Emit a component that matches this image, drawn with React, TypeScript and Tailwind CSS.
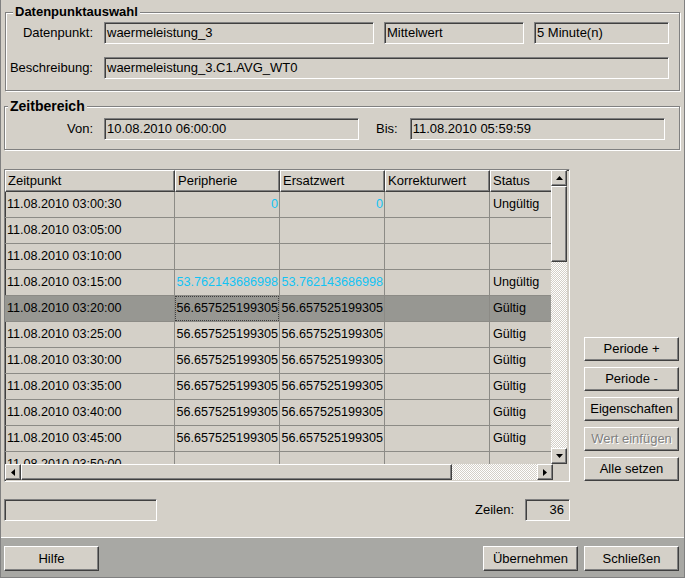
import React from "react";

const raised =
  "bg-[#d4d0c8] border border-t-white border-l-white border-r-[#404040] border-b-[#404040] shadow-[inset_-1px_-1px_0_#808080]";
const sunken =
  "bg-[#d4d0c8] border border-t-[#808080] border-l-[#808080] border-b-white border-r-white shadow-[inset_1px_1px_0_#404040]";
const groupbox =
  "border border-[#808080] shadow-[inset_1px_1px_0_#ffffff,1px_1px_0_#ffffff]";
const dither =
  "bg-[repeating-conic-gradient(#ffffff_0%_25%,#d4d0c8_0%_50%)] bg-[length:2px_2px]";

function Field({ className = "", children, right = false }: { className?: string; children?: React.ReactNode; right?: boolean }) {
  return (
    <div className={`${sunken} h-[22px] flex items-center px-[2px] leading-[20px] whitespace-nowrap overflow-hidden ${right ? "justify-end" : ""} ${className}`}>
      {children}
    </div>
  );
}

function Btn({ children, className = "", disabled = false }: { children: React.ReactNode; className?: string; disabled?: boolean }) {
  return (
    <div
      className={`${raised} w-[95px] h-[24px] flex items-center justify-center text-[13px] ${
        disabled ? "text-[#808080] [text-shadow:1px_1px_0_#ffffff]" : "text-black"
      } ${className}`}
    >
      {children}
    </div>
  );
}

function Arrow({ dir }: { dir: "up" | "down" | "left" | "right" }) {
  const pts = {
    up: "3.5,0 7,4 0,4",
    down: "0,0 7,0 3.5,4",
    left: "4,0 4,7 0,3.5",
    right: "0,0 4,3.5 0,7",
  }[dir];
  const vert = dir === "up" || dir === "down";
  return (
    <svg width={vert ? 7 : 4} height={vert ? 4 : 7} viewBox={vert ? "0 0 7 4" : "0 0 4 7"}>
      <polygon points={pts} fill="#000" />
    </svg>
  );
}

function SbBtn({ dir }: { dir: "up" | "down" | "left" | "right" }) {
  return (
    <div className={`${raised} w-[16px] h-[16px] shrink-0 flex items-center justify-center`}>
      <Arrow dir={dir} />
    </div>
  );
}

type Row = { t: string; p?: string; e?: string; s?: string; cyan?: boolean; right?: boolean; sel?: boolean };

const V = "56.657525199305";
const rows: Row[] = [
  { t: "11.08.2010 03:00:30", p: "0", e: "0", s: "Ungültig", cyan: true, right: true },
  { t: "11.08.2010 03:05:00" },
  { t: "11.08.2010 03:10:00" },
  { t: "11.08.2010 03:15:00", p: "53.762143686998", e: "53.762143686998", s: "Ungültig", cyan: true, right: true },
  { t: "11.08.2010 03:20:00", p: V, e: V, s: "Gültig", sel: true, right: true },
  { t: "11.08.2010 03:25:00", p: V, e: V, s: "Gültig", right: true },
  { t: "11.08.2010 03:30:00", p: V, e: V, s: "Gültig", right: true },
  { t: "11.08.2010 03:35:00", p: V, e: V, s: "Gültig", right: true },
  { t: "11.08.2010 03:40:00", p: V, e: V, s: "Gültig", right: true },
  { t: "11.08.2010 03:45:00", p: V, e: V, s: "Gültig", right: true },
  { t: "11.08.2010 03:50:00" },
];

const cell = "h-[26px] shrink-0 border-r border-b border-[#8c8b86] whitespace-nowrap overflow-hidden flex items-center leading-[25px]";

function HeaderCell({ w, children }: { w: string; children: React.ReactNode }) {
  return (
    <div className={`${raised} ${w} h-[22px] shrink-0 flex items-center pl-[2px] whitespace-nowrap overflow-hidden`}>
      {children}
    </div>
  );
}

function Table() {
  return (
    <div className={`${sunken} w-[566px] h-[313px] flex flex-col text-[12.6px]`}>
      <div className="flex h-[294px] shrink-0">
        <div className="w-[546px] overflow-hidden flex flex-col">
          <div className="flex h-[22px] shrink-0 text-[13px]">
            <HeaderCell w="w-[170px]">Zeitpunkt</HeaderCell>
            <HeaderCell w="w-[105px]">Peripherie</HeaderCell>
            <HeaderCell w="w-[105px]">Ersatzwert</HeaderCell>
            <HeaderCell w="w-[105px]">Korrekturwert</HeaderCell>
            <HeaderCell w="w-[80px]">Status</HeaderCell>
          </div>
          {rows.map((r, i) => {
            const bg = r.sel ? "bg-[#979792]" : "";
            const col = r.cyan ? "text-[#12c3f4]" : "text-black";
            return (
              <div key={i} className="flex shrink-0">
                <div className={`${cell} ${bg} w-[170px] pl-[2px]`}>{r.t}</div>
                <div className={`${cell} ${bg} w-[105px] ${col} ${r.right ? "justify-end" : ""}`}>
                  {r.sel ? (
                    <div className="h-full w-full border border-dotted border-[#404040] flex items-center justify-end leading-[23px]">
                      {r.p}
                    </div>
                  ) : (
                    <span className="pr-[1px]">{r.p}</span>
                  )}
                </div>
                <div className={`${cell} ${bg} w-[105px] ${col} ${r.right ? "justify-end" : ""}`}>
                  <span className="pr-[1px]">{r.e}</span>
                </div>
                <div className={`${cell} ${bg} w-[105px]`}></div>
                <div className={`${cell} ${bg} w-[80px] pl-[3px]`}>{r.s}</div>
              </div>
            );
          })}
        </div>
        <div className="w-[16px] flex flex-col">
          <SbBtn dir="up" />
          <div className={`${raised} h-[76px] w-[16px]`}></div>
          <div className={`flex-1 ${dither}`}></div>
          <SbBtn dir="down" />
        </div>
      </div>
      <div className="flex h-[16px] shrink-0">
        <SbBtn dir="left" />
        <div className={`${raised} w-[431px] h-[16px]`}></div>
        <div className={`flex-1 ${dither}`}></div>
        <SbBtn dir="right" />
        <div className="w-[16px] h-[16px] bg-[#d4d0c8]"></div>
      </div>
    </div>
  );
}

export default function App() {
  return (
    <div className="w-[685px] h-[578px] flex flex-col bg-[#d4d0c8] border-l border-r border-[#808080] font-['Liberation_Sans',Arial,sans-serif] text-[13px] text-black overflow-hidden">
      <div className="flex-1 flex flex-col">
        {/* Datenpunktauswahl */}
        <div className={`${groupbox} mt-[12px] ml-[4px] w-[675px] pb-[11px]`}>
          <span className="block w-fit -mt-[9px] ml-[7px] px-[2px] bg-[#d4d0c8] font-bold text-[13px] leading-[16px]">
            Datenpunktauswahl
          </span>
          <div className="flex items-center mt-[2px]">
            <div className="w-[87px] text-right">Datenpunkt:</div>
            <Field className="ml-[11px] w-[270px]">waermeleistung_3</Field>
            <Field className="ml-[10px] w-[140px]">Mittelwert</Field>
            <Field className="ml-[10px] w-[135px]">5 Minute(n)</Field>
          </div>
          <div className="flex items-center mt-[13px]">
            <div className="w-[87px] text-right">Beschreibung:</div>
            <Field className="ml-[11px] w-[565px]">waermeleistung_3.C1.AVG_WT0</Field>
          </div>
        </div>

        {/* Zeitbereich */}
        <div className={`${groupbox} mt-[15px] ml-[3px] w-[676px] pb-[9px]`}>
          <span className="block w-fit -mt-[9px] ml-[3px] px-[2px] bg-[#d4d0c8] font-bold text-[14px] leading-[16px]">
            Zeitbereich
          </span>
          <div className="flex items-center mt-[4px]">
            <div className="w-[88px] text-right">Von:</div>
            <Field className="ml-[11px] w-[255px]">10.08.2010 06:00:00</Field>
            <div className="ml-[17px]">Bis:</div>
            <Field className="ml-[12px] w-[255px]">11.08.2010 05:59:59</Field>
          </div>
        </div>

        {/* Table + buttons */}
        <div className="flex items-end ml-[3px] mt-[19px]">
          <Table />
          <div className="ml-[14px] mb-[1px] flex flex-col gap-[6px]">
            <Btn>Periode +</Btn>
            <Btn>Periode -</Btn>
            <Btn>Eigenschaften</Btn>
            <Btn disabled>Wert einfügen</Btn>
            <Btn>Alle setzen</Btn>
          </div>
        </div>

        {/* bottom info row */}
        <div className="flex items-center ml-[3px] mt-[17px] w-[566px]">
          <Field className="w-[153px]"></Field>
          <div className="ml-auto">Zeilen:</div>
          <Field right className="ml-[11px] w-[45px] pr-[5px]">36</Field>
        </div>
      </div>

      {/* bottom bar */}
      <div className="h-[41px] shrink-0 border-t border-t-white border-b border-b-[#808080] bg-[#a8a8a4] flex items-start pt-[8px] pl-[3px] pr-[5px]">
        <Btn className="h-[25px]">Hilfe</Btn>
        <Btn className="ml-auto h-[25px]">Übernehmen</Btn>
        <Btn className="ml-[6px] h-[25px]">Schließen</Btn>
      </div>
    </div>
  );
}
